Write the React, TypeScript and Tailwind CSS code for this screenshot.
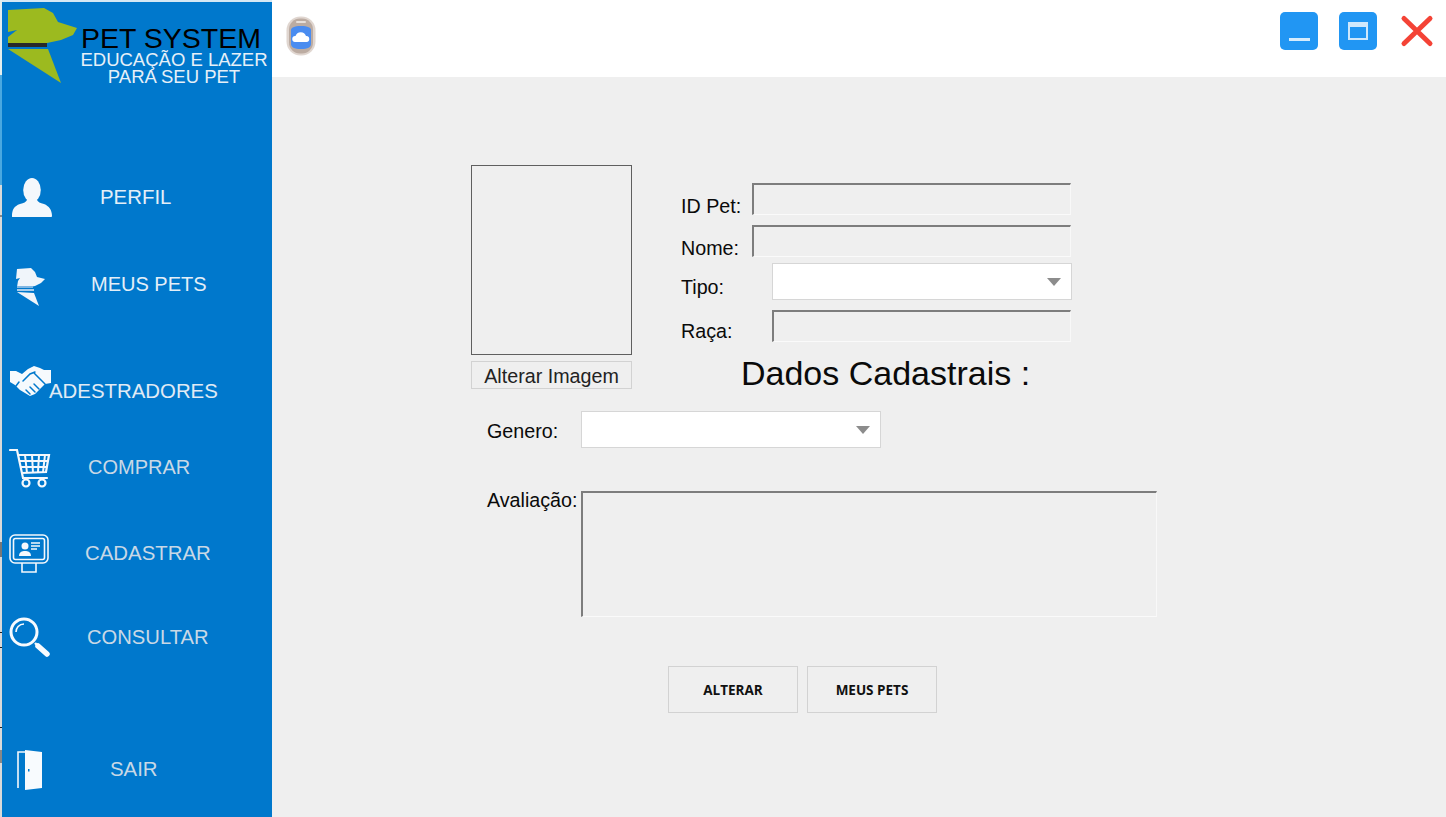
import type { ReactNode } from "react";

function PersonIcon() {
  return (
    <svg width="42" height="42" viewBox="0 0 42 42" fill="#f4f8fc" className="translate-x-[2px]">
      <ellipse cx="21" cy="13" rx="8.8" ry="12" />
      <path d="M1 39c0-6 2-10 8-12 4-1 6-2 7-4h10c1 2 3 3 7 4 5 2 8 6 8 12 0 1-1 1-1 1H2c-1 0-1 0-1-1z" />
    </svg>
  );
}

function DogIcon() {
  return (
    <svg width="32" height="40" viewBox="0 0 32 40" fill="#f0f5fa">
      <path d="M3 3l14-1 4 4 2 5 8 2-4 4-6 3-6 1H3l1-6 2-3-4 1z" />
      <rect x="3" y="20" width="16" height="2" fill="#7fb6e3" />
      <rect x="3" y="23" width="17" height="2" fill="#a9cdeb" />
      <path d="M3 26l17 1 5 13z" />
    </svg>
  );
}

function HandshakeIcon() {
  return (
    <svg width="41" height="31" viewBox="0 0 41 31">
      <path
        d="M0 6L6 6 12 9 18 4 24 1 30 3 34 5 41 5V18L35 19 31 23 25 29 20 31 15 28 10 25 5 20 0 17z"
        fill="#f6fafd"
      />
      <path
        d="M13 16L20 9 25 7M24 8L35 19M20 29L16 25M25 27L20 22M29 24L24 19M6 21L9 17"
        fill="none"
        stroke="#0078cc"
        strokeWidth="1.5"
        strokeLinecap="round"
      />
    </svg>
  );
}

function CartIcon() {
  return (
    <svg width="42" height="40" viewBox="0 0 42 40" fill="none" stroke="#f4f8fc" strokeWidth="2.2">
      <path d="M1 2h7l6 28h24" strokeLinecap="round" />
      <path d="M9 7h31l-3 17-24 1" />
      <path d="M10 13h29M11 19h27M16 7l2 18M23 7l1 18M30 7l-1 17M36 7l-2 17" strokeWidth="2" />
      <circle cx="17" cy="35" r="3.5" />
      <circle cx="33" cy="35" r="3.5" />
    </svg>
  );
}

function KioskIcon() {
  return (
    <svg width="42" height="40" viewBox="0 0 42 40" fill="none" stroke="#f4f8fc" strokeWidth="1.6">
      <rect x="1" y="1" width="38" height="28" rx="5" />
      <rect x="4.5" y="4.5" width="31" height="21" rx="2" />
      <path d="M13 29v9h14v-9" />
      <circle cx="16" cy="12" r="3.5" fill="#f4f8fc" stroke="none" />
      <path d="M10 22c0-4 3-5 6-5s6 1 6 5z" fill="#f4f8fc" stroke="none" />
      <path d="M22 9h9M22 12h9M22 15h6" />
    </svg>
  );
}

function SearchIcon() {
  return (
    <svg width="42" height="42" viewBox="0 0 42 42" fill="none" stroke="#f8fbfe">
      <circle cx="15" cy="15" r="13" strokeWidth="3" />
      <path d="M7 15c0-4 3-8 8-8" strokeWidth="1.6" />
      <path d="M26 26l2 2" strokeWidth="2.4" />
      <path d="M29 29l9 8" strokeWidth="5.5" strokeLinecap="round" />
    </svg>
  );
}

function DoorIcon() {
  return (
    <svg width="26" height="42" viewBox="0 0 26 42">
      <path d="M1 39V3h8" fill="none" stroke="#f4f8fc" strokeWidth="1.6" />
      <path d="M8 1l17 2v36L8 41z" fill="#f8fbfe" />
      <rect x="11" y="20" width="1.5" height="2.5" fill="#0078cc" />
    </svg>
  );
}

function Logo() {
  return (
    <svg width="74" height="80" viewBox="0 0 74 80" className="shrink-0">
      <path d="M2 6L38 4 47 9 52 18 71 24 67 31 55 36 41 39H2V33L11 26 2 28z" fill="#9cba1f" />
      <rect x="2" y="39" width="39" height="4" fill="#27292b" />
      <path d="M2 45H42L55 79z" fill="#9cba1f" />
    </svg>
  );
}

function NavItem(props: { icon: ReactNode; label: string; className: string; labelClass: string }) {
  return (
    <div className={"flex items-center pl-[3px] " + props.className}>
      <div className="w-[50px] flex justify-center shrink-0">{props.icon}</div>
      <span className={"leading-none whitespace-nowrap " + props.labelClass}>{props.label}</span>
    </div>
  );
}

function Sunken(props: { className: string }) {
  return (
    <div
      className={
        "border-t-2 border-l-2 border-r border-b border-t-[#7d7d7d] border-l-[#7d7d7d] border-r-[#f8f8f8] border-b-[#fafafa] bg-[#efefef] " +
        props.className
      }
    />
  );
}

function Combo(props: { className: string }) {
  return (
    <div className={"bg-white border border-[#d6d6d6] flex items-center justify-end pr-[10px] " + props.className}>
      <div className="w-0 h-0 mt-[1px] border-x-[7px] border-x-transparent border-t-[8px] border-t-[#8c8c8c]" />
    </div>
  );
}

function FieldLabel(props: { children: ReactNode; className: string }) {
  return <span className={"text-[19.7px] leading-none text-[#0a0a0a] " + props.className}>{props.children}</span>;
}

function EdgeStrip() {
  return (
    <div className="w-[2px] h-full shrink-0 flex flex-col bg-[#d9d9d9]">
      <div className="h-[75px] bg-[#e4eeee]" />
      <div className="h-[110px] bg-[#4aa8e0]" />
      <div className="h-[30px]" />
      <div className="h-[2px] bg-[#888]" />
      <div className="h-[325px]" />
      <div className="h-[15px] bg-[#777]" />
      <div className="h-[75px]" />
      <div className="h-[1px] bg-[#222]" />
      <div className="h-[14px]" />
      <div className="h-[1px] bg-[#222]" />
      <div className="h-[79px]" />
      <div className="h-[1px] bg-[#222]" />
      <div className="h-[22px]" />
      <div className="h-[13px] bg-[#888]" />
    </div>
  );
}

export default function App() {
  return (
    <div className="w-[1446px] h-[817px] overflow-hidden flex bg-[#efefef] font-['Liberation_Sans',Arial,sans-serif]">
      <EdgeStrip />
      <div className="w-[270px] shrink-0 h-full pt-[2px] bg-[#d5e8f4]">
        <aside className="h-full bg-[#0078cc] flex flex-col">
          <div className="flex h-[88px] pl-[4px] pt-[2px] shrink-0">
            <Logo />
            <div className="w-[190px] -ml-[1px] flex flex-col items-center">
              <span className="text-[28.5px] leading-none text-black mt-[20px] -ml-[6px] whitespace-nowrap">PET SYSTEM</span>
              <span className="text-[18.5px] leading-[17px] text-[#e6f0f8] text-center -mt-[2px] whitespace-nowrap">
                EDUCAÇÃO E LAZER
                <br />
                PARA SEU PET
              </span>
            </div>
          </div>
          <NavItem className="mt-[87px]" icon={<PersonIcon />} label="PERFIL" labelClass="text-[20.4px] ml-[45px] -mt-[2px] text-[#e4eff8]" />
          <NavItem className="mt-[47px]" icon={<DogIcon />} label="MEUS PETS" labelClass="text-[20px] ml-[36px] -mt-[4px] text-[#e4eff8]" />
          <NavItem className="mt-[53px]" icon={<HandshakeIcon />} label="ADESTRADORES" labelClass="text-[20.4px] -ml-[6px] mt-[22px] text-[#e0ebf5]" />
          <NavItem className="mt-[47px]" icon={<CartIcon />} label="COMPRAR" labelClass="text-[20px] ml-[33px] -mt-[2px] text-[#c9d8e6]" />
          <NavItem className="mt-[46px]" icon={<KioskIcon />} label="CADASTRAR" labelClass="text-[20.4px] ml-[30px] -mt-[2px] text-[#c9d8e6]" />
          <NavItem className="mt-[43px]" icon={<SearchIcon />} label="CONSULTAR" labelClass="text-[20.2px] ml-[32px] -mt-[2px] text-[#c9d8e6]" />
          <NavItem className="mt-[90px]" icon={<DoorIcon />} label="SAIR" labelClass="text-[20.4px] ml-[55px] -mt-[2px] text-[#c9d8e6]" />
        </aside>
      </div>

      <div className="flex-1 flex flex-col bg-[#efefef]">
        <header className="h-[77px] bg-white flex items-center pl-[14px] pr-[10px] shrink-0">
          <svg width="30" height="40" viewBox="0 0 30 40" className="-mt-[6px]">
            <rect x="0.5" y="0.5" width="29" height="39" rx="14" fill="#e0d6d0" />
            <rect x="3" y="2.5" width="24" height="35" rx="11" fill="#bcaca2" />
            <path d="M5 14c0-2 3-4 10-4s10 2 10 4v14c0 3-3 5-10 5S5 31 5 28z" fill="#4a8cf0" />
            <path d="M9 26a3 3 0 0 1 .5-6 5.5 5.5 0 0 1 10.5 0 3 3 0 0 1 .5 6z" fill="#fff" />
            <rect x="10" y="5" width="10" height="2" rx="1" fill="#e8e0da" />
          </svg>
          <div className="ml-auto flex items-center -mt-[16px]">
            <div className="w-[38px] h-[38px] rounded-[5px] bg-[#2196f3] flex items-end justify-center pb-[9px]">
              <div className="w-[21px] h-[3px] bg-[#d6ecfd]" />
            </div>
            <div className="w-[38px] h-[38px] rounded-[5px] bg-[#2196f3] flex items-center justify-center ml-[21px]">
              <div className="w-[20px] h-[18px] mt-[1px] border-2 border-t-[5px] border-[#cfe8fc]" />
            </div>
            <svg width="34" height="34" viewBox="0 0 34 34" className="ml-[23px]" stroke="#f44336" strokeWidth="5" strokeLinecap="round">
              <path d="M4 4.5l26 25M30 4.5L4 29.5" />
            </svg>
            <div className="w-[2px]" />
          </div>
        </header>

        <main className="pl-[199px] pt-[88px] flex flex-col">
          <div className="flex">
            <div className="w-[161px] shrink-0">
              <div className="h-[190px] border border-[#5f5f5f]" />
              <div className="mt-[6px] h-[28px] pt-[3px] border border-[#d2d2d2] flex items-center justify-center text-[19.7px] text-[#222] whitespace-nowrap">
                Alterar Imagem
              </div>
            </div>
            <div className="ml-[49px] pt-[18px] flex flex-col w-[391px]">
              <div className="flex items-end">
                <FieldLabel className="w-[71px] -mb-[2px]">ID Pet:</FieldLabel>
                <Sunken className="w-[319px] h-[32px]" />
              </div>
              <div className="flex items-end mt-[10px]">
                <FieldLabel className="w-[71px] -mb-[2px]">Nome:</FieldLabel>
                <Sunken className="w-[319px] h-[32px]" />
              </div>
              <div className="flex items-center mt-[6px]">
                <FieldLabel className="w-[91px] mt-[12px]">Tipo:</FieldLabel>
                <Combo className="w-[300px] h-[37px]" />
              </div>
              <div className="flex items-end mt-[10px]">
                <FieldLabel className="w-[91px]">Raça:</FieldLabel>
                <Sunken className="w-[299px] h-[32px]" />
              </div>
              <h1 className="text-[34px] leading-none font-normal text-[#0a0a0a] mt-[14px] ml-[60px] whitespace-nowrap">
                Dados Cadastrais :
              </h1>
            </div>
          </div>

          <div className="flex items-center ml-[16px] mt-[21px]">
            <FieldLabel className="w-[94px] mt-[4px]">Genero:</FieldLabel>
            <Combo className="w-[300px] h-[37px]" />
          </div>
          <div className="flex items-start ml-[16px] mt-[43px]">
            <FieldLabel className="w-[94px]">Avaliação:</FieldLabel>
            <Sunken className="w-[576px] h-[126px]" />
          </div>
          <div className="flex gap-[9px] ml-[197px] mt-[49px]">
            <div className="w-[130px] h-[47px] pt-[1px] border border-[#d2d2d2] flex items-center justify-center font-['Open_Sans',sans-serif] font-bold text-[13.5px] text-[#111]">
              ALTERAR
            </div>
            <div className="w-[130px] h-[47px] pt-[1px] border border-[#d2d2d2] flex items-center justify-center font-['Open_Sans',sans-serif] font-bold text-[13.5px] text-[#111]">
              MEUS PETS
            </div>
          </div>
        </main>
      </div>
    </div>
  );
}
